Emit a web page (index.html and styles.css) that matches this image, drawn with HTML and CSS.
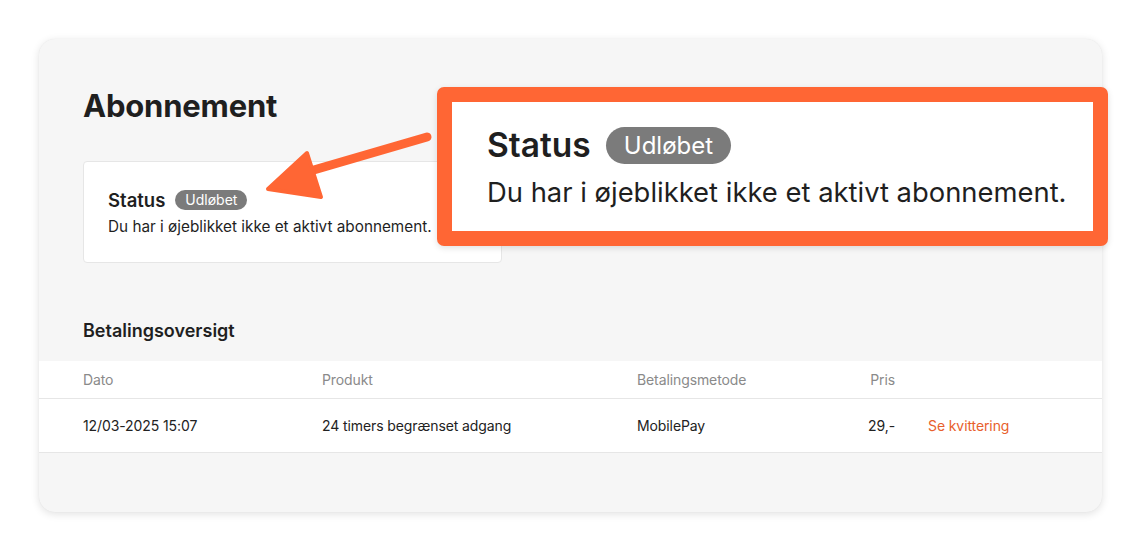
FILE: index.html
```html
<!DOCTYPE html>
<html lang="da">
<head>
<meta charset="utf-8">
<title>Abonnement</title>
<link rel="stylesheet" href="styles.css">
</head>
<body>
<main class="card">
  <h1 class="title">Abonnement</h1>
  <section class="status-card">
    <div class="status-head">
      <span class="status-label">Status</span>
      <span class="badge">Udløbet</span>
    </div>
    <p class="status-desc">Du har i øjeblikket ikke et aktivt abonnement.</p>
  </section>

  <h2 class="subtitle">Betalingsoversigt</h2>
  <div class="table">
    <div class="row head">
      <span>Dato</span>
      <span>Produkt</span>
      <span>Betalingsmetode</span>
      <span class="price">Pris</span>
      <span></span>
    </div>
    <div class="row body">
      <span>12/03-2025 15:07</span>
      <span>24 timers begrænset adgang</span>
      <span>MobilePay</span>
      <span class="price">29,-</span>
      <a class="link" href="#">Se kvittering</a>
    </div>
  </div>
</main>

<div class="callout">
  <div class="callout-head">
    <span class="callout-label">Status</span>
    <span class="callout-badge">Udløbet</span>
  </div>
  <p class="callout-desc">Du har i øjeblikket ikke et aktivt abonnement.</p>
</div>

<svg class="arrow" width="1141" height="552" viewBox="0 0 1141 552" aria-hidden="true">
  <path d="M427 137 L300 174" stroke="#ff6634" stroke-width="9" stroke-linecap="round" fill="none"/>
  <path d="M268 189 L307 153 L321 197 Z" fill="#ff6634" stroke="#ff6634" stroke-width="4" stroke-linejoin="round"/>
</svg>
</body>
</html>
```

FILE: styles.css
```css
* { box-sizing: border-box; }
html, body { margin: 0; padding: 0; background: #ffffff; }
body {
  position: relative;
  width: 1141px;
  height: 552px;
  overflow: hidden;
  padding: 39px;
  font-family: Inter, "Noto Sans", "Liberation Sans", sans-serif;
  color: #1f1f1f;
}

.card {
  width: 1063px;
  height: 473px;
  background: #f6f6f6;
  border-radius: 16px;
  box-shadow: 0 2px 8px rgba(0,0,0,0.12), 0 0 1px rgba(0,0,0,0.08);
  padding: 49px 0 0 0;
  display: flex;
  flex-direction: column;
}

.title {
  margin: 0 0 37px 44px;
  font-size: 31px;
  line-height: 36px;
  font-weight: 700;
  letter-spacing: -0.2px;
}

.status-card {
  margin-left: 44px;
  width: 419px;
  height: 102px;
  background: #fff;
  border: 1px solid #e6e6e6;
  border-radius: 4px;
  padding: 25px 24px 0 24px;
}
.status-head { display: flex; align-items: center; gap: 10px; height: 25px; }
.status-label { font-size: 18.5px; font-weight: 600; }
.badge {
  background: #7b7b7b;
  color: #fff;
  font-size: 14px;
  line-height: 20px;
  padding: 0 10px;
  border-radius: 10px;
}
.status-desc { margin: 4px 0 0 0; font-size: 15.3px; line-height: 22px; }

.subtitle {
  margin: 56px 0 18px 44px;
  font-size: 18px;
  line-height: 24px;
  font-weight: 600;
}

.table { background: #fff; }
.row {
  display: grid;
  grid-template-columns: 239px 315px 200px 58px 1fr;
  align-items: center;
  padding-left: 44px;
  border-bottom: 1px solid #e6e6e6;
  font-size: 14px;
  letter-spacing: -0.1px;
}
.row.head { height: 38px; color: #8a8a8a; }
.row.body { height: 54px; color: #222; }
.price { text-align: right; }
.link { color: #e8602c; text-decoration: none; padding-left: 33px; }

.callout {
  position: absolute;
  left: 437px;
  top: 87px;
  width: 671px;
  height: 159px;
  background: #fff;
  border: 15px solid #ff6634;
  border-radius: 7px;
  padding: 23px 0 0 35px;
  box-shadow: 0 2px 6px rgba(0,0,0,0.12);
}
.callout-head { display: flex; align-items: center; gap: 15px; height: 40px; }
.callout-label { font-size: 33.5px; font-weight: 600; }
.callout-badge {
  background: #7b7b7b;
  color: #fff;
  font-size: 24px;
  line-height: 37px;
  padding: 0 18px;
  border-radius: 19px;
}
.callout-desc { margin: 9px 0 0 0; font-size: 27.4px; line-height: 37px; }

.arrow { position: absolute; left: 0; top: 0; pointer-events: none; }
```
